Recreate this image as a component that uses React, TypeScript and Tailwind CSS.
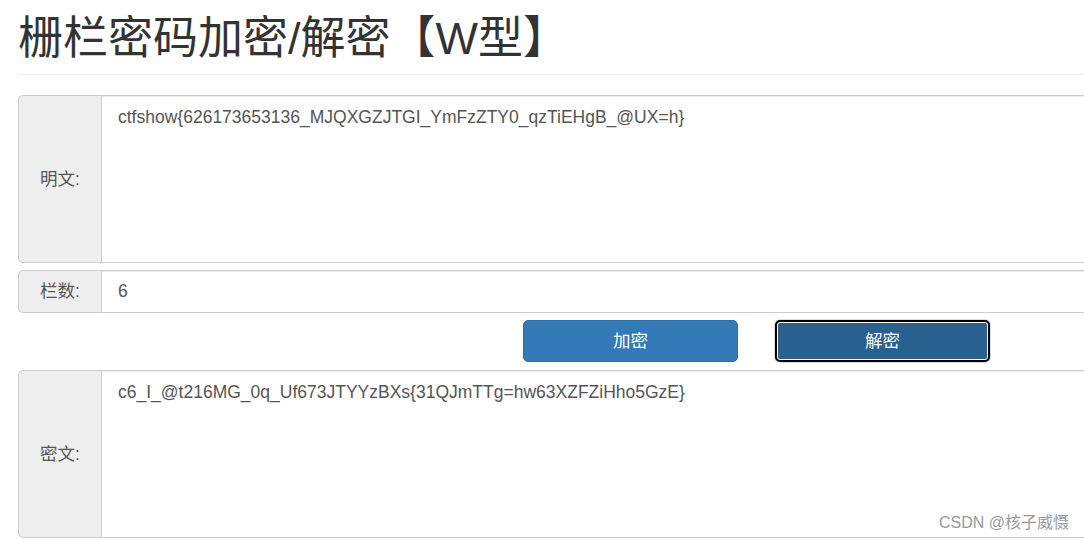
export default function App() {
  const font = "font-['Liberation_Sans','Noto_Sans_CJK_SC',sans-serif]";
  return (
    <div className={`relative w-[1084px] h-[542px] overflow-hidden bg-white ${font}`}>
      <div className="w-[1120px] pl-[18px]">
        {/* Header */}
        <div className="pt-[14px] pb-[10px] border-b border-[#eee]">
          <h1 className="text-[45px] leading-[50px] font-normal text-[#333]">栅栏密码加密/解密【W型】</h1>
        </div>

        {/* Plaintext */}
        <div className="mt-[20px] flex h-[168px] text-[17.5px] text-[#555]">
          <div className="w-[84px] flex items-center justify-center bg-[#eee] border border-[#ccc] rounded-l-[5px]">明文:</div>
          <div className="flex-1 border border-l-0 border-[#ccc] pl-[16px] pr-[15px] pt-[9px] leading-[25px] shadow-[inset_0_1px_1px_rgba(0,0,0,0.075)]">
            ctfshow{"{"}626173653136_MJQXGZJTGI_YmFzZTY0_qzTiEHgB_@UX=h{"}"}
          </div>
        </div>

        {/* Rails */}
        <div className="mt-[7px] flex h-[43px] text-[17.5px] text-[#555]">
          <div className="w-[84px] flex items-center justify-center bg-[#eee] border border-[#ccc] rounded-l-[5px]">栏数:</div>
          <div className="flex-1 flex items-center border border-l-0 border-[#ccc] pl-[16px] pr-[15px] shadow-[inset_0_1px_1px_rgba(0,0,0,0.075)]">6</div>
        </div>

        {/* Buttons */}
        <div className="mt-[7px] flex h-[43px] text-[17.5px] text-white">
          <button className="ml-[505px] w-[215px] h-[42px] rounded-[5px] bg-[#337ab7] border border-[#2e6da4]">加密</button>
          <button className="ml-[37px] w-[215px] h-[42px] rounded-[5px] bg-[#286090] border-2 border-black shadow-[inset_0_0_0_1px_#fff,0_0_0_1px_#ddd]">解密</button>
        </div>

        {/* Ciphertext */}
        <div className="mt-[7px] flex h-[168px] text-[17.5px] text-[#555]">
          <div className="w-[84px] flex items-center justify-center bg-[#eee] border border-[#ccc] rounded-l-[5px]">密文:</div>
          <div className="flex-1 border border-l-0 border-[#ccc] pl-[16px] pr-[15px] pt-[9px] leading-[25px] shadow-[inset_0_1px_1px_rgba(0,0,0,0.075)]">
            c6_I_@t216MG_0q_Uf673JTYYzBXs{"{"}31QJmTTg=hw63XZFZiHho5GzE{"}"}
          </div>
        </div>
      </div>

      <div className="absolute right-[15px] bottom-[7px] text-[16px] text-[#999]">CSDN @核子威慑</div>
    </div>
  );
}
